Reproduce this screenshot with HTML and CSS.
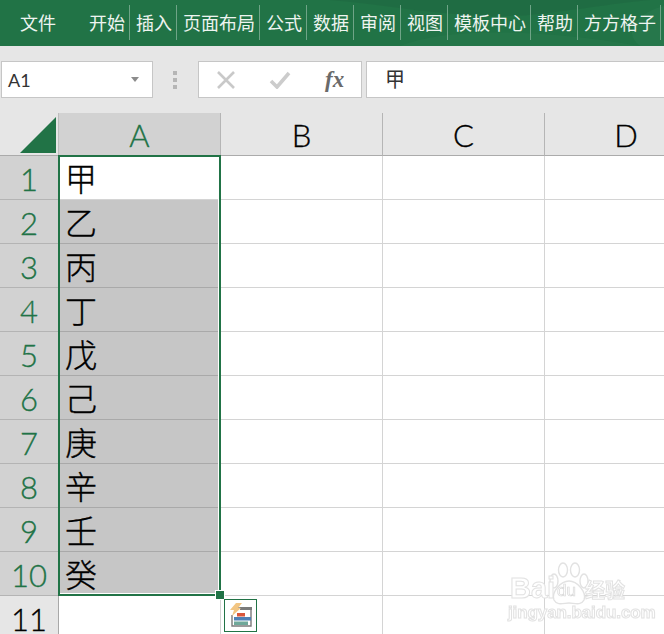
FILE: index.html
```html
<!DOCTYPE html>
<html lang="zh-CN">
<head>
<meta charset="utf-8">
<title>Excel</title>
<link rel="stylesheet" href="styles.css">
</head>
<body>
<div class="app">
  <nav class="ribbon">
    <svg class="ribbon-art" width="664" height="46" viewBox="0 0 664 46" aria-hidden="true">
      <path d="M330 0C400 6 470 22 540 14C590 8 610 4 650 0Z" fill="#1f6a41" opacity=".7"/>
      <path d="M640 46C620 30 640 12 664 6V46Z" fill="#2a7a4e" opacity=".6"/>
      <path d="M400 46C440 30 520 26 640 46Z" fill="#2a784d" opacity=".55"/>
    </svg>
    <span class="tab-file">文件</span>
    <span class="tab tab-first">开始</span>
    <span class="tab">插入</span>
    <span class="tab">页面布局</span>
    <span class="tab">公式</span>
    <span class="tab">数据</span>
    <span class="tab">审阅</span>
    <span class="tab">视图</span>
    <span class="tab">模板中心</span>
    <span class="tab">帮助</span>
    <span class="tab">方方格子</span>
  </nav>
  <div class="formula-bar">
    <div class="name-box"><span>A1</span><i class="caret"></i></div>
    <div class="grip"><i></i><i></i><i></i></div>
    <div class="fx-box">
      <svg class="icon" width="20" height="18" viewBox="0 0 20 18" aria-hidden="true"><path d="M2 1L18 17M18 1L2 17" stroke="#c9c9c9" stroke-width="2.6" fill="none"/></svg>
      <svg class="icon" width="22" height="18" viewBox="0 0 22 18" aria-hidden="true"><path d="M2 10L8 16L20 2" stroke="#cccccc" stroke-width="3.6" fill="none"/></svg>
      <span class="fx">fx</span>
    </div>
    <div class="formula-input">甲</div>
  </div>
  <div class="sheet">
    <div class="corner"><svg width="36" height="36" viewBox="0 0 36 36" aria-hidden="true"><path d="M0 36L36 0V36Z" fill="#217346"/></svg></div>
    <div class="col col-sel">A</div>
    <div class="col">B</div>
    <div class="col">C</div>
    <div class="col">D</div>

    <div class="row row-sel">1</div><div class="cell cell-a cell-first">甲</div><div class="cell"></div><div class="cell"></div><div class="cell"></div>
    <div class="row row-sel">2</div><div class="cell cell-a cell-sel">乙</div><div class="cell"></div><div class="cell"></div><div class="cell"></div>
    <div class="row row-sel">3</div><div class="cell cell-a cell-sel">丙</div><div class="cell"></div><div class="cell"></div><div class="cell"></div>
    <div class="row row-sel">4</div><div class="cell cell-a cell-sel">丁</div><div class="cell"></div><div class="cell"></div><div class="cell"></div>
    <div class="row row-sel">5</div><div class="cell cell-a cell-sel">戊</div><div class="cell"></div><div class="cell"></div><div class="cell"></div>
    <div class="row row-sel">6</div><div class="cell cell-a cell-sel">己</div><div class="cell"></div><div class="cell"></div><div class="cell"></div>
    <div class="row row-sel">7</div><div class="cell cell-a cell-sel">庚</div><div class="cell"></div><div class="cell"></div><div class="cell"></div>
    <div class="row row-sel">8</div><div class="cell cell-a cell-sel">辛</div><div class="cell"></div><div class="cell"></div><div class="cell"></div>
    <div class="row row-sel">9</div><div class="cell cell-a cell-sel">壬</div><div class="cell"></div><div class="cell"></div><div class="cell"></div>
    <div class="row row-sel">10</div><div class="cell cell-a cell-sel">癸</div><div class="cell"></div><div class="cell"></div><div class="cell"></div>
    <div class="row">11</div><div class="cell cell-a"></div><div class="cell"></div><div class="cell"></div><div class="cell"></div>

    <div class="selection"><i class="handle"></i></div>
    <div class="quick">
      <svg width="29" height="29" viewBox="0 0 29 29" aria-hidden="true">
        <path d="M12 7H25V25H6V14" fill="none" stroke="#7a7a7a" stroke-width="1.4"/>
        <rect x="14" y="6" width="12" height="3" fill="#7a7a7a"/>
        <rect x="11" y="12" width="8" height="3.5" fill="#d9573c"/>
        <rect x="8" y="16" width="17" height="3.5" fill="#4f81b5"/>
        <rect x="8" y="20.5" width="14" height="3.5" fill="#6fa89a"/>
        <path d="M10 2H16L12 7H15L6 15L8 9H4Z" fill="#f2c582"/>
      </svg>
    </div>
  </div>
  <div class="watermark">
    <svg class="paw" width="40" height="46" viewBox="0 0 40 46" aria-hidden="true">
      <g fill="#fff" stroke="#e2e2e2" stroke-width="1.4">
        <ellipse cx="5" cy="19" rx="4" ry="7"/>
        <ellipse cx="14" cy="8" rx="4.5" ry="7"/>
        <ellipse cx="26" cy="8" rx="4.5" ry="7"/>
        <ellipse cx="35" cy="19" rx="4" ry="7"/>
        <path d="M20 19C28 19 38 30 35 38C32 44 25 41 20 41C15 41 8 44 5 38C2 30 12 19 20 19Z"/>
      </g>
    </svg>
    <span class="wm-bai">Bai</span>
    <span class="wm-du">du</span>
    <span class="wm-jy">经验</span>
    <span class="wm-url">jingyan.baidu.com</span>
  </div>
</div>
</body>
</html>
```
FILE: styles.css
```css
* { box-sizing: border-box; }
html, body { margin: 0; padding: 0; }
body { width: 664px; height: 634px; overflow: hidden; background: #fff; font-family: "Noto Sans CJK SC", sans-serif; }
.app { position: relative; width: 664px; height: 634px; overflow: hidden; }

.ribbon { position: relative; display: flex; align-items: flex-start; height: 46px; padding: 5px 0 0 20px; background: #217346; color: #eef4f0; font-size: 18px; }
.ribbon-art { position: absolute; left: 0; top: 0; }
.tab-file { position: relative; width: 69px; height: 35px; line-height: 35px; }
.tab { position: relative; height: 35px; line-height: 35px; padding: 0 4px 0 6px; border-right: 1px solid #6fa487; white-space: nowrap; }
.tab-first { padding-left: 0; }

.formula-bar { display: flex; align-items: flex-start; height: 67px; padding: 15px 0 0 1px; background: #e6e6e6; }
.name-box { display: flex; align-items: center; justify-content: space-between; width: 152px; height: 37px; padding: 0 13px 0 6px; background: #fff; border: 1px solid #c6c6c6; font-family: Lato, sans-serif; font-size: 18px; color: #333; }
.caret { width: 0; height: 0; border: 4px solid transparent; border-top: 5px solid #8c8c8c; border-bottom: 0; }
.grip { display: flex; flex-direction: column; gap: 3px; width: 45px; height: 37px; padding: 10px 0 0 20px; }
.grip i { display: block; width: 4px; height: 4px; background: #b5b5b5; }
.fx-box { display: flex; align-items: center; width: 164px; height: 37px; padding-left: 17px; background: #fff; border: 1px solid #c6c6c6; }
.icon { margin-right: 33px; }
.icon + .icon { margin-right: 34px; }
.fx { font-family: "Liberation Serif", serif; font-style: italic; font-weight: 700; font-size: 23px; line-height: 30px; color: #6a6a6a; }
.formula-input { flex: 1; height: 37px; margin-left: 4px; padding-left: 18px; background: #fff; border: 1px solid #c6c6c6; border-right: 0; font-size: 20px; line-height: 34px; color: #333; }

.sheet { position: relative; display: grid; grid-template-columns: 59px 162px 162px 162px 163px; grid-template-rows: 43px repeat(11, 44px); background: #fff; font-family: Lato, sans-serif; font-weight: 300; -webkit-text-stroke: .35px currentColor; }
.corner { background: #e6e6e6; border-right: 1px solid #bdbdbd; border-bottom: 1px solid #ababab; padding: 4px 0 0 20px; }
.corner svg { display: block; }
.col { display: flex; align-items: center; justify-content: center; background: #e6e6e6; border-right: 1px solid #b5b5b5; border-bottom: 1px solid #ababab; font-size: 31px; color: #000; padding-top: 2px; }
.col-sel { background: #d2d2d2; color: #217346; }
.row { display: flex; align-items: center; justify-content: center; background: #e6e6e6; border-right: 1px solid #a8a8a8; border-bottom: 1px solid #c0c0c0; font-size: 31px; color: #000; padding-top: 3px; }
.row-sel { background: #d2d2d2; color: #217346; border-bottom-color: #b4b4b4; }
.cell { border-right: 1px solid #d4d4d4; border-bottom: 1px solid #d4d4d4; font-family: "Noto Sans CJK SC", sans-serif; font-weight: 300; font-size: 32px; line-height: 42px; color: #000; padding-left: 6px; white-space: nowrap; }
.cell-first { background: #fff; padding-left: 6px; }
.cell-sel { background: #c6c6c6; border-bottom-color: #a9a9a9; }

.selection { position: absolute; left: 58px; top: 42px; width: 163px; height: 441px; border: 2px solid #217346; pointer-events: none; box-shadow: inset -1px -1px 0 #fff; }
.handle { position: absolute; right: -5px; bottom: -5px; width: 8px; height: 8px; background: #217346; outline: 1px solid #fff; }
.quick { position: absolute; left: 224px; top: 486px; width: 33px; height: 33px; padding: 1px; background: #fff; border: 1px solid #217346; }
.quick svg { display: block; }

.watermark { position: absolute; left: 0; top: 0; width: 664px; height: 634px; pointer-events: none; color: #fff; -webkit-text-stroke: 1px #e2e2e2; font-family: "Liberation Sans", sans-serif; filter: blur(.4px); }
.paw { position: absolute; left: 549px; top: 562px; }
.wm-bai { position: absolute; left: 510px; top: 571px; font-size: 29px; font-weight: 700; line-height: 34px; }
.wm-du { position: absolute; left: 557px; top: 581px; font-size: 17px; line-height: 20px; -webkit-text-stroke: .7px #d8d8d8; }
.wm-jy { position: absolute; left: 585px; top: 578px; font-family: "Noto Sans CJK SC", sans-serif; font-size: 20px; font-weight: 700; line-height: 24px; }
.wm-url { position: absolute; left: 508px; top: 603px; font-size: 17px; line-height: 20px; letter-spacing: -.1px; font-weight: 700; }
```
